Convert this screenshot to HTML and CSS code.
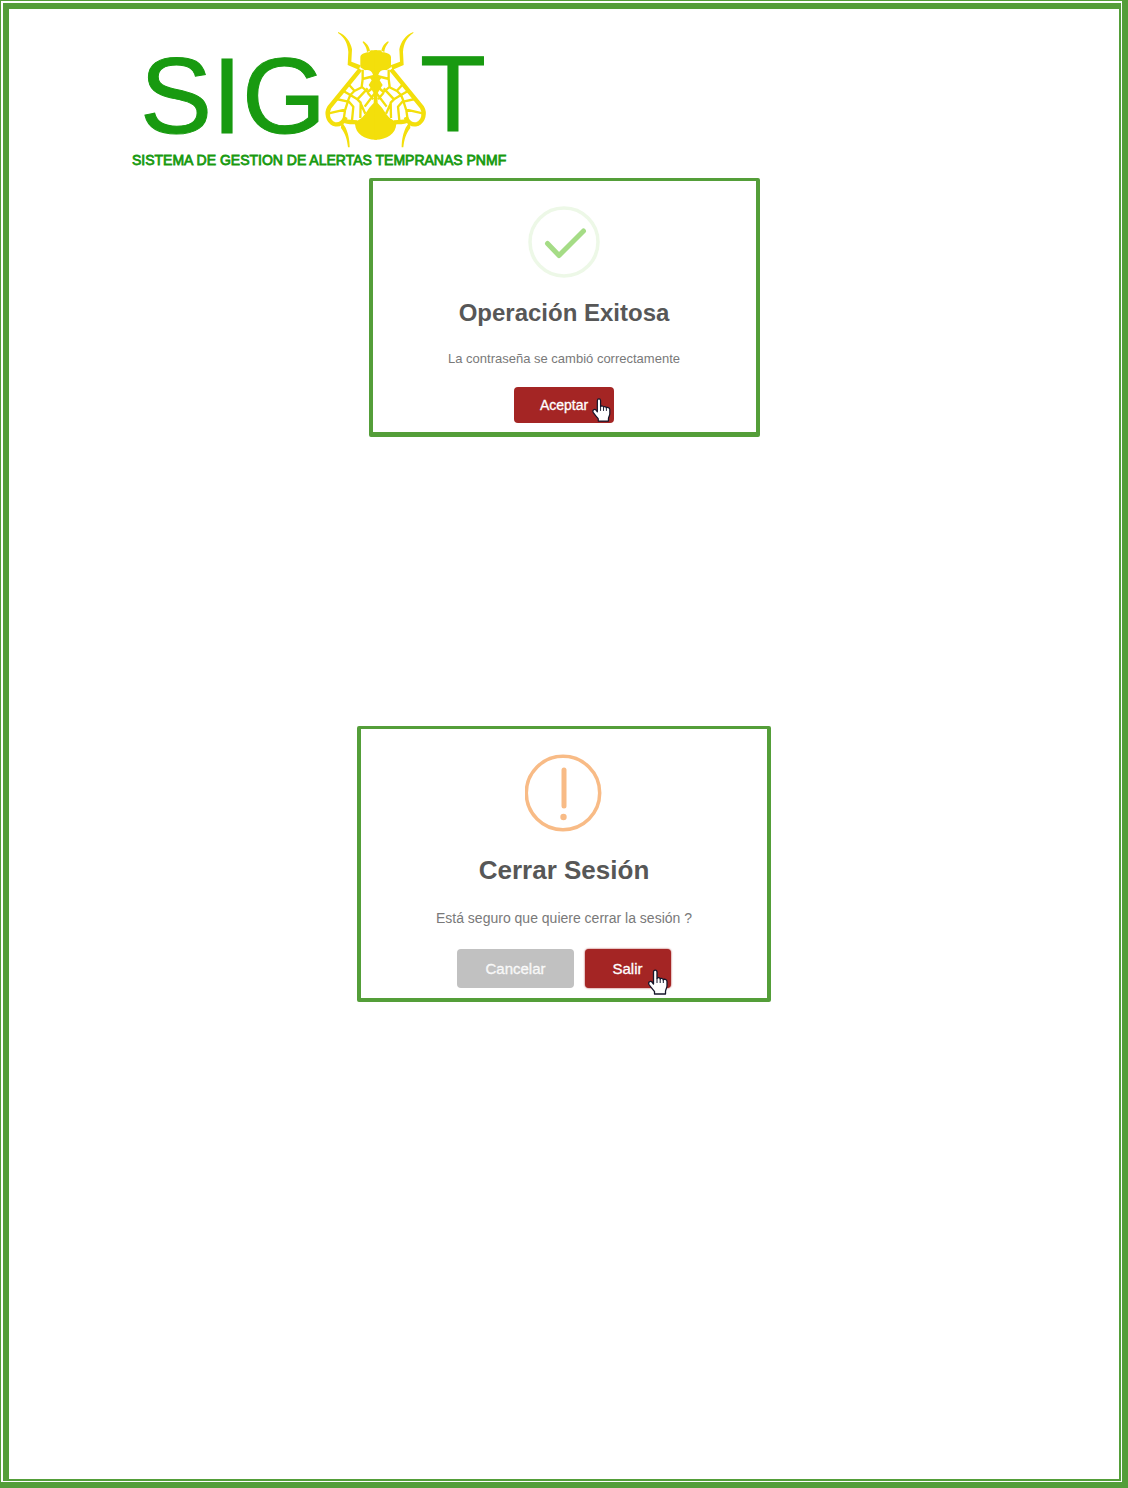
FILE: index.html
```html
<!DOCTYPE html>
<html lang="es">

<head>
    <meta charset="utf-8">
    <title>SIGAT</title>
    <meta name="viewport" content="width=device-width, initial-scale=1">
    <link rel="stylesheet" href="styles.css">
</head>

<body>
    <svg class="sprite" aria-hidden="true">
        <symbol id="hand" viewBox="0 0 20 26">
            <path d="M5.500 3C5.500.4 9 .4 9 3v6.500c.6-1.300 3-1.100 3.200.5.500-1.100 2.800-.9 3 .8.700-1 3.800-.6 3.800 1.700V17c0 2-1.500 3.500-1.500 5.500V25h-11v-2.500C4.500 20 3 18.500 1 15.500-.2 13 2.500 11.500 4 13l1.500 2z" fill="#fff" stroke="#15152a" stroke-width="1.300" stroke-linejoin="round"/>
            <path d="M9 9.500V14M12.200 10v4M15.300 11v3" fill="none" stroke="#15152a" stroke-width="1"/>
        </symbol>
        <!-- media abeja, la otra mitad es el reflejo -->
        <symbol id="half-bee" viewBox="0 0 360 390">
            <path class="bee-fill" d="M183 76h-19l-5 6c-15 0-26 7-26 15v30l14 9c9-3 20 0 24 13 2 4-1 8-9 10l5 7-9 14 10 16 6 10-1 28-13 14-12 18-10 12c-12 8-20 12-21 19 2 30 28 47 62 47h4z"/>
            <path class="bee-fill" d="M66 21c23 8 38 30 42 52l-2 37 28 11-6 13-33-14 2-39C95 56 86 38 66 24z"/>
            <path class="bee-fill" d="M141 49c10 4 18 15 21 28l-9 4c-1-11-5-19-13-29z"/>
            <path class="bee-fill" d="M76 288l13 20c7 16 12 34 12 59h-5c-3-24-7-39-21-58z"/>
            <path class="vein-lg" d="M133 133L40 247c-10 17-5 41 14 50 15 4 25-3 31-13l4-8"/>
            <path class="vein-lg" d="M80 286c15 7 29 5 44 6"/>
            <path class="vein" d="M140 134v28l-3 24M139 162l36-9M139 186l-24 12-12 12-8 19M94 174l22 24M78 196l25 14 21 13 31-33M61 222l35 8M38 265l52-12M96 228l-9 28-4 28M97 228l15 17-4 42M138 186l17 15 18-15M124 223l10 10-1 46M133 233l15 33M177 204l-31 41M155 203l17 20"/>
        </symbol>
    </svg>

    <div class="page">
        <div class="sheet">
            <header class="header">
                <svg class="logo" viewBox="0 0 400 155" role="img" aria-label="SIGAT">
                    <text class="logo-name" x="20" y="113">SIG</text>
                    <text class="logo-name" x="300" y="111">T</text>
                    <text class="logo-sub" x="12" y="145">SISTEMA DE GESTION DE ALERTAS TEMPRANAS PNMF</text>
                    <!-- abeja -->
                    <svg x="196" y="5" width="120" height="130" viewBox="0 0 360 390">
                        <use href="#half-bee" width="360" height="390"/>
                        <use href="#half-bee" width="360" height="390" transform="matrix(-1 0 0 1 358 0)"/>
                    </svg>
                </svg>
            </header>

            <main class="content">
                <section class="alert alert-success">
                    <svg class="alert-icon" viewBox="0 0 72 72" aria-hidden="true">
                        <circle cx="36" cy="36" r="34" fill="none" stroke="#edf8e7" stroke-width="3.500"/>
                        <path d="M19.500 37.500L31 49.500 55.500 25" fill="none" stroke="#a5dc86" stroke-width="5" stroke-linecap="round" stroke-linejoin="round"/>
                    </svg>
                    <h2>Operación Exitosa</h2>
                    <p>La contraseña se cambió correctamente</p>
                    <div class="buttons">
                        <button type="button" class="btn btn-confirm">Aceptar
                            <svg class="cursor" aria-hidden="true"><use href="#hand"/></svg>
                        </button>
                    </div>
                </section>

                <section class="alert alert-warning">
                    <svg class="alert-icon" viewBox="0 0 78 78" aria-hidden="true">
                        <circle cx="38" cy="39" r="36.700" fill="none" stroke="#f8bb86" stroke-width="3.500"/>
                        <path d="M39 16v36" fill="none" stroke="#f8bb86" stroke-width="5" stroke-linecap="round"/>
                        <circle cx="38.500" cy="63" r="3.200" fill="#f8bb86"/>
                    </svg>
                    <h2>Cerrar Sesión</h2>
                    <p>Está seguro que quiere cerrar la sesión ?</p>
                    <div class="buttons">
                        <button type="button" class="btn btn-cancel">Cancelar</button>
                        <button type="button" class="btn btn-confirm">Salir
                            <svg class="cursor" aria-hidden="true"><use href="#hand"/></svg>
                        </button>
                    </div>
                </section>
            </main>
        </div>
    </div>
</body>

</html>
```
FILE: styles.css
```css
* {
    box-sizing: border-box;
}

body {
    margin: 0;
    background: #fff;
    font-family: "Liberation Sans", Arial, sans-serif;
}

.sprite {
    position: absolute;
    width: 0;
    height: 0;
}

/* marco doble de la hoja */
.page {
    display: flex;
    min-height: 100vh;
    padding: 2px 1px 1px 2px;
    border: solid #549e39;
    border-width: 1px 6px 6px 1px;
}

.sheet {
    flex: 1;
    border: solid #549e39;
    border-width: 6px 2px 2px 6px;
}

.header {
    padding: 11px 0 0 111px;
}

.logo {
    display: block;
    width: 400px;
    max-width: 100%;
}

.logo-name {
    font-size: 108px;
    fill: #189a10;
    stroke: #189a10;
    stroke-width: 1px;
}

.logo-sub {
    font-size: 14px;
    fill: #189a10;
    stroke: #189a10;
    stroke-width: 0.8px;
}

.bee-fill {
    fill: #f3df0b;
}

.vein,
.vein-lg {
    fill: none;
    stroke: #f3df0b;
    stroke-width: 7px;
    stroke-linejoin: round;
}

.vein-lg {
    stroke-width: 13px;
}

.content {
    display: flex;
    flex-direction: column;
    align-items: center;
    gap: 289px;
    padding: 3px 16px 16px;
}

.alert {
    display: flex;
    flex-direction: column;
    align-items: center;
    width: 100%;
    padding: 25px 8px 9px;
    border: 4px solid #549e39;
    border-top-width: 3px;
    border-radius: 2px;
    text-align: center;
}

.alert h2 {
    margin: 20px 0 21px;
    color: #575757;
    font-size: 24px;
    line-height: 30px;
}

.alert p {
    margin: 0 0 18px;
    color: #797979;
    font-size: 13px;
    line-height: 20px;
}

.alert-success {
    max-width: 391px;
    border-bottom-width: 5px;
}

.alert-success .alert-icon {
    width: 72px;
    height: 72px;
}

.alert-warning {
    max-width: 414px;
    padding-bottom: 10px;
}

.alert-warning .alert-icon {
    width: 78px;
    height: 78px;
}

.alert-warning h2 {
    margin: 22px 0;
    font-size: 26px;
    line-height: 32px;
}

.alert-warning p {
    margin-bottom: 21px;
    font-size: 14px;
}

.buttons {
    display: flex;
    justify-content: center;
    gap: 11px;
}

.btn {
    position: relative;
    height: 36px;
    padding: 0 26px;
    border: 0;
    border-radius: 4px;
    color: #fff;
    font-family: inherit;
    font-size: 14px;
    -webkit-text-stroke: 0.3px #fff;
    cursor: pointer;
}

.alert-warning .btn {
    height: 39px;
    padding: 0 28px;
    font-size: 15px;
}

.btn-confirm {
    background: #a42524;
}

.alert-warning .btn-confirm {
    box-shadow: 0 0 2px #a42524;
}

.btn-cancel,
.alert-warning .btn-cancel {
    background: #c1c1c1;
    color: #f4f4f4;
}

/* puntero sobre el botón */
.cursor {
    position: absolute;
    right: 3px;
    bottom: 1px;
    width: 19px;
    height: 24px;
}

.alert-warning .cursor {
    right: 3px;
    bottom: -7px;
    width: 20px;
    height: 26px;
}
```
